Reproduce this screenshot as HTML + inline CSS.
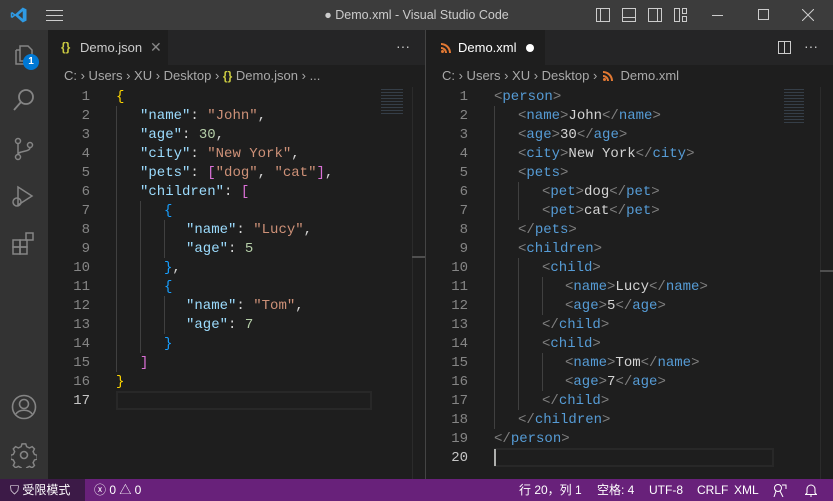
<!DOCTYPE html>
<html><head><meta charset="utf-8"><style>
*{margin:0;padding:0;box-sizing:border-box}
body{width:833px;height:501px;overflow:hidden;background:#1e1e1e;font-family:"Liberation Sans","Noto Sans CJK SC",sans-serif;position:relative}
.abs{position:absolute}
#title{left:0;top:0;width:833px;height:30px;background:#3c3c3c;color:#ccc;font-size:12.5px}
#act{left:0;top:30px;width:48px;height:449px;background:#333}
.tabs{top:30px;height:35px;background:#252526}
.tab{top:0;height:35px;background:#1e1e1e;font-size:13px;line-height:35px}
.bc{top:65px;height:22px;font-size:13px;color:#a9a9a9;line-height:22px}
.code{font-family:"Liberation Mono",monospace;font-size:14px;color:#d4d4d4}
.ln{position:absolute;width:40px;text-align:right;color:#858585;height:19px;line-height:20px}
.cl{position:absolute;height:19px;line-height:20px;white-space:pre}
.k{color:#9cdcfe}.s{color:#ce9178}.n{color:#b5cea8}.y{color:#ffd700}.p{color:#da70d6}.b{color:#179fff}.g{color:#808080}.t{color:#569cd6}
.ig{position:absolute;width:1px;background:#404040}
#status{left:0;top:479px;width:833px;height:22px;background:#68217a;color:#fff;font-size:12px;line-height:22px}
</style></head><body>
<div id="title" class="abs">
<svg class="abs" style="left:10px;top:6px" width="18" height="18" viewBox="0 0 24 24"><path d="M17 2 L22 4.5 V19.5 L17 22 L7 13 L3 16 L1 15 V9 L3 8 L7 11 Z M17 7 L11 12 L17 17 Z M3 10.5 V13.5 L5 12Z" fill="#2f9ae3"/></svg>
<div class="abs" style="left:46px;top:10px;width:17px;height:1px;background:#ccc;box-shadow:0 5px 0 #ccc,0 10px 0 #ccc"></div>
<div class="abs" style="left:0;width:833px;text-align:center;top:8px">● Demo.xml - Visual Studio Code</div>
<svg class="abs" style="left:596px;top:8px" width="100" height="14" fill="none" stroke="#ccc"><rect x="0.5" y="0.5" width="13" height="13"/><line x1="4.5" y1="1" x2="4.5" y2="13"/><rect x="26.5" y="0.5" width="13" height="13"/><line x1="27" y1="9.5" x2="39" y2="9.5"/><rect x="52.5" y="0.5" width="13" height="13"/><line x1="61.5" y1="1" x2="61.5" y2="13"/><rect x="78.5" y="0.5" width="5" height="13"/><rect x="86.5" y="0.5" width="4" height="5"/><rect x="86.5" y="8.5" width="4" height="5"/></svg>
<div class="abs" style="left:712px;top:15px;width:11px;height:1px;background:#ccc"></div>
<div class="abs" style="left:758px;top:9px;width:11px;height:11px;border:1px solid #ccc"></div>
<svg class="abs" style="left:802px;top:9px" width="12" height="12" stroke="#ccc"><line x1="0" y1="0" x2="12" y2="12"/><line x1="12" y1="0" x2="0" y2="12"/></svg>
</div>
<div id="act" class="abs">
<svg class="abs" style="left:12px;top:12px" width="24" height="24" fill="none" stroke="#858585" stroke-width="1.5"><path d="M8 4h8l4 4v11H8z M4 8h4 M4 8v14h11v-3"/></svg>
<div class="abs" style="left:23px;top:24px;width:16px;height:16px;border-radius:8px;background:#0078d4;color:#fff;font-size:10px;text-align:center;line-height:16px;font-weight:bold">1</div>
<svg class="abs" style="left:12px;top:58px" width="24" height="24" fill="none" stroke="#858585" stroke-width="1.8"><circle cx="14" cy="9" r="7"/><line x1="9" y1="14" x2="2" y2="22"/></svg>
<svg class="abs" style="left:12px;top:106px" width="24" height="26" fill="none" stroke="#858585" stroke-width="1.5"><circle cx="6" cy="5" r="2.5"/><circle cx="6" cy="21" r="2.5"/><circle cx="18" cy="9" r="2.5"/><path d="M6 7.5v11 M18 11.5c0 5-12 3-12 7"/></svg>
<svg class="abs" style="left:10px;top:154px" width="26" height="26" fill="none" stroke="#858585" stroke-width="1.5"><path d="M8 3l14 9-14 9z"/><circle cx="7" cy="18" r="4"/></svg>
<svg class="abs" style="left:12px;top:202px" width="24" height="24" fill="none" stroke="#858585" stroke-width="1.5"><rect x="1" y="8" width="7" height="7"/><rect x="8" y="8" width="7" height="7"/><rect x="1" y="15" width="7" height="7"/><rect x="8" y="15" width="7" height="7"/><rect x="14" y="1" width="7" height="7"/></svg>
<svg class="abs" style="left:11px;top:364px" width="26" height="26" fill="none" stroke="#858585" stroke-width="1.6"><circle cx="13" cy="13" r="11.5"/><circle cx="13" cy="10" r="4.5"/><path d="M5 20c3-5 13-5 16 0"/></svg>
<svg class="abs" style="left:11px;top:412px" width="26" height="26" fill="none" stroke="#858585" stroke-width="1.6"><circle cx="13" cy="13" r="3.5"/><path d="M11 1h4l1 3 3 1.5 3-1.5 2.5 2.5-1.5 3 1.5 3 3 1v4l-3 1-1.5 3 1.5 3-2.5 2.5-3-1.5-3 1.5-1 3h-4l-1-3-3-1.5-3 1.5-2.5-2.5 1.5-3-1.5-3-3-1v-4l3-1 1.5-3-1.5-3 2.5-2.5 3 1.5 3-1.5z" transform="scale(.92) translate(1 1)"/></svg>
</div>
<!-- left group -->
<div class="abs tabs" style="left:48px;width:377px">
<div class="abs tab" style="left:0;width:120px;color:#ccc"><span style="position:absolute;left:13px;color:#cbcb41;font-size:12px;font-weight:bold">{}</span><span style="position:absolute;left:32px">Demo.json</span><span style="position:absolute;left:102px;color:#888;font-size:14px">✕</span></div>
<div class="abs" style="left:348px;top:0;color:#ccc;line-height:32px;font-size:14px">···</div>
</div>
<div class="abs bc" style="left:64px">C: › Users › XU › Desktop › <span style="color:#cbcb41;font-weight:bold;font-size:12px">{}</span> Demo.json › ...</div>
<div class="abs" style="left:412px;top:87px;width:14px;height:392px;border-left:1px solid #2b2b2b"></div>
<div class="abs" style="left:412px;top:256px;width:13px;height:2px;background:#4f4f4f"></div>
<div class="abs" style="left:381px;top:89px;width:22px;height:26px;opacity:.3;background:repeating-linear-gradient(#6a8aa8 0 1px,transparent 1px 3px)"></div>
<div class="abs" style="left:116px;top:391px;width:256px;height:19px;border:2px solid #282828"></div>
<div class="code">
<div class="ig" style="left:116px;top:106px;height:266px"></div>
<div class="ig" style="left:140px;top:201px;height:152px"></div>
<div class="ig" style="left:164px;top:220px;height:38px"></div>
<div class="ig" style="left:164px;top:296px;height:38px"></div>
<div class="ln" style="left:50px;top:87px">1</div><div class="cl" style="left:116px;top:87px"><span class="y">{</span></div>
<div class="ln" style="left:50px;top:106px">2</div><div class="cl" style="left:140px;top:106px"><span class="k">"name"</span>: <span class="s">"John"</span>,</div>
<div class="ln" style="left:50px;top:125px">3</div><div class="cl" style="left:140px;top:125px"><span class="k">"age"</span>: <span class="n">30</span>,</div>
<div class="ln" style="left:50px;top:144px">4</div><div class="cl" style="left:140px;top:144px"><span class="k">"city"</span>: <span class="s">"New York"</span>,</div>
<div class="ln" style="left:50px;top:163px">5</div><div class="cl" style="left:140px;top:163px"><span class="k">"pets"</span>: <span class="p">[</span><span class="s">"dog"</span>, <span class="s">"cat"</span><span class="p">]</span>,</div>
<div class="ln" style="left:50px;top:182px">6</div><div class="cl" style="left:140px;top:182px"><span class="k">"children"</span>: <span class="p">[</span></div>
<div class="ln" style="left:50px;top:201px">7</div><div class="cl" style="left:164px;top:201px"><span class="b">{</span></div>
<div class="ln" style="left:50px;top:220px">8</div><div class="cl" style="left:186px;top:220px"><span class="k">"name"</span>: <span class="s">"Lucy"</span>,</div>
<div class="ln" style="left:50px;top:239px">9</div><div class="cl" style="left:186px;top:239px"><span class="k">"age"</span>: <span class="n">5</span></div>
<div class="ln" style="left:50px;top:258px">10</div><div class="cl" style="left:164px;top:258px"><span class="b">}</span>,</div>
<div class="ln" style="left:50px;top:277px">11</div><div class="cl" style="left:164px;top:277px"><span class="b">{</span></div>
<div class="ln" style="left:50px;top:296px">12</div><div class="cl" style="left:186px;top:296px"><span class="k">"name"</span>: <span class="s">"Tom"</span>,</div>
<div class="ln" style="left:50px;top:315px">13</div><div class="cl" style="left:186px;top:315px"><span class="k">"age"</span>: <span class="n">7</span></div>
<div class="ln" style="left:50px;top:334px">14</div><div class="cl" style="left:164px;top:334px"><span class="b">}</span></div>
<div class="ln" style="left:50px;top:353px">15</div><div class="cl" style="left:140px;top:353px"><span class="p">]</span></div>
<div class="ln" style="left:50px;top:372px">16</div><div class="cl" style="left:116px;top:372px"><span class="y">}</span></div>
<div class="ln" style="left:50px;top:391px;color:#c6c6c6">17</div>
</div>
<!-- right group -->
<div class="abs" style="left:425px;top:30px;width:1px;height:449px;background:#444"></div>
<div class="abs tabs" style="left:426px;width:407px">
<div class="abs tab" style="left:0;width:119px;color:#fff"><svg class="abs" style="left:15px;top:13px" width="10" height="10" fill="#e37933"><circle cx="1.5" cy="8.5" r="1.5"/><path d="M0 4a6 6 0 0 1 6 6h-2a4 4 0 0 0-4-4z M0 0a10 10 0 0 1 10 10h-2a8 8 0 0 0-8-8z"/></svg><span style="position:absolute;left:32px">Demo.xml</span><span style="position:absolute;left:100px;top:14px;width:8px;height:8px;border-radius:4px;background:#fff"></span></div>
<svg class="abs" style="left:352px;top:11px" width="13" height="13" fill="none" stroke="#ccc"><rect x="0.5" y="0.5" width="12" height="12"/><line x1="6.5" y1="1" x2="6.5" y2="12"/></svg>
<div class="abs" style="left:378px;top:0;color:#ccc;line-height:32px;font-size:14px">···</div>
</div>
<div class="abs bc" style="left:442px">C: › Users › XU › Desktop › <svg width="10" height="10" fill="#e37933" style="margin:0 4px -1px 2px"><circle cx="1.5" cy="8.5" r="1.5"/><path d="M0 4a6 6 0 0 1 6 6h-2a4 4 0 0 0-4-4z M0 0a10 10 0 0 1 10 10h-2a8 8 0 0 0-8-8z"/></svg> Demo.xml</div>
<div class="abs" style="left:820px;top:87px;width:13px;height:392px;border-left:1px solid #2b2b2b"></div>
<div class="abs" style="left:820px;top:270px;width:13px;height:2px;background:#4f4f4f"></div>
<div class="abs" style="left:784px;top:89px;width:20px;height:36px;opacity:.3;background:repeating-linear-gradient(#6a8aa8 0 1px,transparent 1px 3px)"></div>
<div class="abs" style="left:494px;top:448px;width:280px;height:19px;border:2px solid #282828"></div>
<div class="abs" style="left:494px;top:449px;width:2px;height:17px;background:#aeafad"></div>
<div class="code">
<div class="ig" style="left:494px;top:106px;height:323px"></div>
<div class="ig" style="left:518px;top:182px;height:38px"></div>
<div class="ig" style="left:518px;top:258px;height:152px"></div>
<div class="ig" style="left:542px;top:277px;height:38px"></div>
<div class="ig" style="left:542px;top:353px;height:38px"></div>
<div class="ln" style="left:428px;top:87px">1</div><div class="cl" style="left:494px;top:87px"><span class="g">&lt;</span><span class="t">person</span><span class="g">&gt;</span></div>
<div class="ln" style="left:428px;top:106px">2</div><div class="cl" style="left:518px;top:106px"><span class="g">&lt;</span><span class="t">name</span><span class="g">&gt;</span>John<span class="g">&lt;/</span><span class="t">name</span><span class="g">&gt;</span></div>
<div class="ln" style="left:428px;top:125px">3</div><div class="cl" style="left:518px;top:125px"><span class="g">&lt;</span><span class="t">age</span><span class="g">&gt;</span>30<span class="g">&lt;/</span><span class="t">age</span><span class="g">&gt;</span></div>
<div class="ln" style="left:428px;top:144px">4</div><div class="cl" style="left:518px;top:144px"><span class="g">&lt;</span><span class="t">city</span><span class="g">&gt;</span>New York<span class="g">&lt;/</span><span class="t">city</span><span class="g">&gt;</span></div>
<div class="ln" style="left:428px;top:163px">5</div><div class="cl" style="left:518px;top:163px"><span class="g">&lt;</span><span class="t">pets</span><span class="g">&gt;</span></div>
<div class="ln" style="left:428px;top:182px">6</div><div class="cl" style="left:542px;top:182px"><span class="g">&lt;</span><span class="t">pet</span><span class="g">&gt;</span>dog<span class="g">&lt;/</span><span class="t">pet</span><span class="g">&gt;</span></div>
<div class="ln" style="left:428px;top:201px">7</div><div class="cl" style="left:542px;top:201px"><span class="g">&lt;</span><span class="t">pet</span><span class="g">&gt;</span>cat<span class="g">&lt;/</span><span class="t">pet</span><span class="g">&gt;</span></div>
<div class="ln" style="left:428px;top:220px">8</div><div class="cl" style="left:518px;top:220px"><span class="g">&lt;/</span><span class="t">pets</span><span class="g">&gt;</span></div>
<div class="ln" style="left:428px;top:239px">9</div><div class="cl" style="left:518px;top:239px"><span class="g">&lt;</span><span class="t">children</span><span class="g">&gt;</span></div>
<div class="ln" style="left:428px;top:258px">10</div><div class="cl" style="left:542px;top:258px"><span class="g">&lt;</span><span class="t">child</span><span class="g">&gt;</span></div>
<div class="ln" style="left:428px;top:277px">11</div><div class="cl" style="left:565px;top:277px"><span class="g">&lt;</span><span class="t">name</span><span class="g">&gt;</span>Lucy<span class="g">&lt;/</span><span class="t">name</span><span class="g">&gt;</span></div>
<div class="ln" style="left:428px;top:296px">12</div><div class="cl" style="left:565px;top:296px"><span class="g">&lt;</span><span class="t">age</span><span class="g">&gt;</span>5<span class="g">&lt;/</span><span class="t">age</span><span class="g">&gt;</span></div>
<div class="ln" style="left:428px;top:315px">13</div><div class="cl" style="left:542px;top:315px"><span class="g">&lt;/</span><span class="t">child</span><span class="g">&gt;</span></div>
<div class="ln" style="left:428px;top:334px">14</div><div class="cl" style="left:542px;top:334px"><span class="g">&lt;</span><span class="t">child</span><span class="g">&gt;</span></div>
<div class="ln" style="left:428px;top:353px">15</div><div class="cl" style="left:565px;top:353px"><span class="g">&lt;</span><span class="t">name</span><span class="g">&gt;</span>Tom<span class="g">&lt;/</span><span class="t">name</span><span class="g">&gt;</span></div>
<div class="ln" style="left:428px;top:372px">16</div><div class="cl" style="left:565px;top:372px"><span class="g">&lt;</span><span class="t">age</span><span class="g">&gt;</span>7<span class="g">&lt;/</span><span class="t">age</span><span class="g">&gt;</span></div>
<div class="ln" style="left:428px;top:391px">17</div><div class="cl" style="left:542px;top:391px"><span class="g">&lt;/</span><span class="t">child</span><span class="g">&gt;</span></div>
<div class="ln" style="left:428px;top:410px">18</div><div class="cl" style="left:518px;top:410px"><span class="g">&lt;/</span><span class="t">children</span><span class="g">&gt;</span></div>
<div class="ln" style="left:428px;top:429px">19</div><div class="cl" style="left:494px;top:429px"><span class="g">&lt;/</span><span class="t">person</span><span class="g">&gt;</span></div>
<div class="ln" style="left:428px;top:448px;color:#c6c6c6">20</div>
</div>
<div id="status" class="abs">
<div class="abs" style="left:0;top:0;width:85px;height:22px;background:#3c1a47;padding-left:10px">⛉ 受限模式</div>
<div class="abs" style="left:94px">ⓧ 0 △ 0</div>
<div class="abs" style="left:519px">行 20，列 1</div>
<div class="abs" style="left:597px">空格: 4</div>
<div class="abs" style="left:649px">UTF-8</div>
<div class="abs" style="left:697px">CRLF</div>
<div class="abs" style="left:734px">XML</div>
<svg class="abs" style="left:773px;top:5px" width="14" height="13" fill="none" stroke="#fff"><circle cx="5" cy="4" r="3.5"/><path d="M3 7l-2 6 M7 7l3 6 M9 1h4v4"/></svg>
<svg class="abs" style="left:805px;top:4px" width="12" height="14" fill="none" stroke="#fff"><path d="M2 10V6a4 4 0 0 1 8 0v4l1.5 1.5h-11z M5 13h2"/></svg>
</div>
</body></html>
